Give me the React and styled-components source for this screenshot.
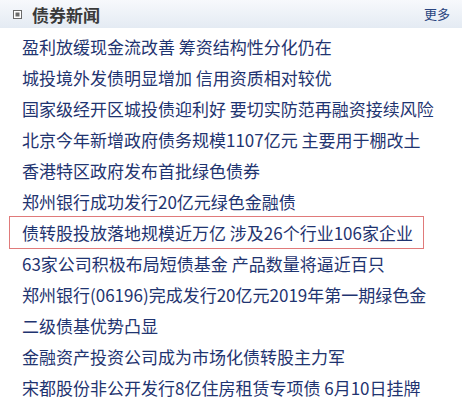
import styled, { createGlobalStyle } from 'styled-components';

const GlobalStyle = createGlobalStyle`
  body {
    margin: 0;
    background: #ffffff;
    font-family: "Noto Sans CJK SC", "Noto Sans", sans-serif;
  }
`;

const news = [
  '盈利放缓现金流改善 筹资结构性分化仍在',
  '城投境外发债明显增加 信用资质相对较优',
  '国家级经开区城投债迎利好 要切实防范再融资接续风险',
  '北京今年新增政府债务规模1107亿元 主要用于棚改土',
  '香港特区政府发布首批绿色债券',
  '郑州银行成功发行20亿元绿色金融债',
  '债转股投放落地规模近万亿 涉及26个行业106家企业',
  '63家公司积极布局短债基金 产品数量将逼近百只',
  '郑州银行(06196)完成发行20亿元2019年第一期绿色金',
  '二级债基优势凸显',
  '金融资产投资公司成为市场化债转股主力军',
  '宋都股份非公开发行8亿住房租赁专项债 6月10日挂牌',
];

const App = () => {
  return (
    <>
      <GlobalStyle />
      <Panel>
        <Header>
          <Title>
            <TitleIcon />
            债券新闻
          </Title>
          <More href="#">更多</More>
        </Header>
        <NewsList>
          {news.map((item, i) => (
            <NewsItem key={i}>
              <NewsLink href="#" $active={i === 6}>
                {item}
              </NewsLink>
            </NewsItem>
          ))}
        </NewsList>
      </Panel>
    </>
  );
};

const Panel = styled.div`
  width: 462px;
  height: 413px;
  overflow: hidden;
  background: #ffffff;
`;

const Header = styled.div`
  height: 28px;
  display: flex;
  align-items: center;
  justify-content: space-between;
  padding: 0 12px 0 13px;
  background: linear-gradient(#f7f9fc, #e4ebf3);
`;

const Title = styled.div`
  display: flex;
  align-items: center;
  gap: 10px;
  font-size: 17px;
  font-weight: bold;
  color: #3a3a3a;
  letter-spacing: 0;
`;

const TitleIcon = styled.span`
  width: 7px;
  height: 7px;
  border: 1px solid #6a6a6a;
  background: #ffffff;
  box-shadow: inset 0 0 0 1.5px #ffffff, inset 0 0 0 4px #6a6a6a;
`;

const More = styled.a`
  font-size: 13px;
  color: #2a4580;
  text-decoration: none;
  margin-top: -2px;
`;

const NewsList = styled.ul`
  list-style: none;
  margin: 3px 0 0;
  padding: 0;
`;

const NewsItem = styled.li`
  height: 31px;
  display: flex;
  align-items: center;
  padding-left: 10px;
`;

const NewsLink = styled.a`
  display: inline-block;
  height: 31px;
  line-height: 31px;
  padding: 0 10px 0 12px;
  font-size: 17px;
  color: #1f3470;
  text-decoration: none;
  white-space: nowrap;
  outline: ${(p) => (p.$active ? '1px solid #e07a7a' : 'none')};
  outline-offset: 0;
`;

export default App;
